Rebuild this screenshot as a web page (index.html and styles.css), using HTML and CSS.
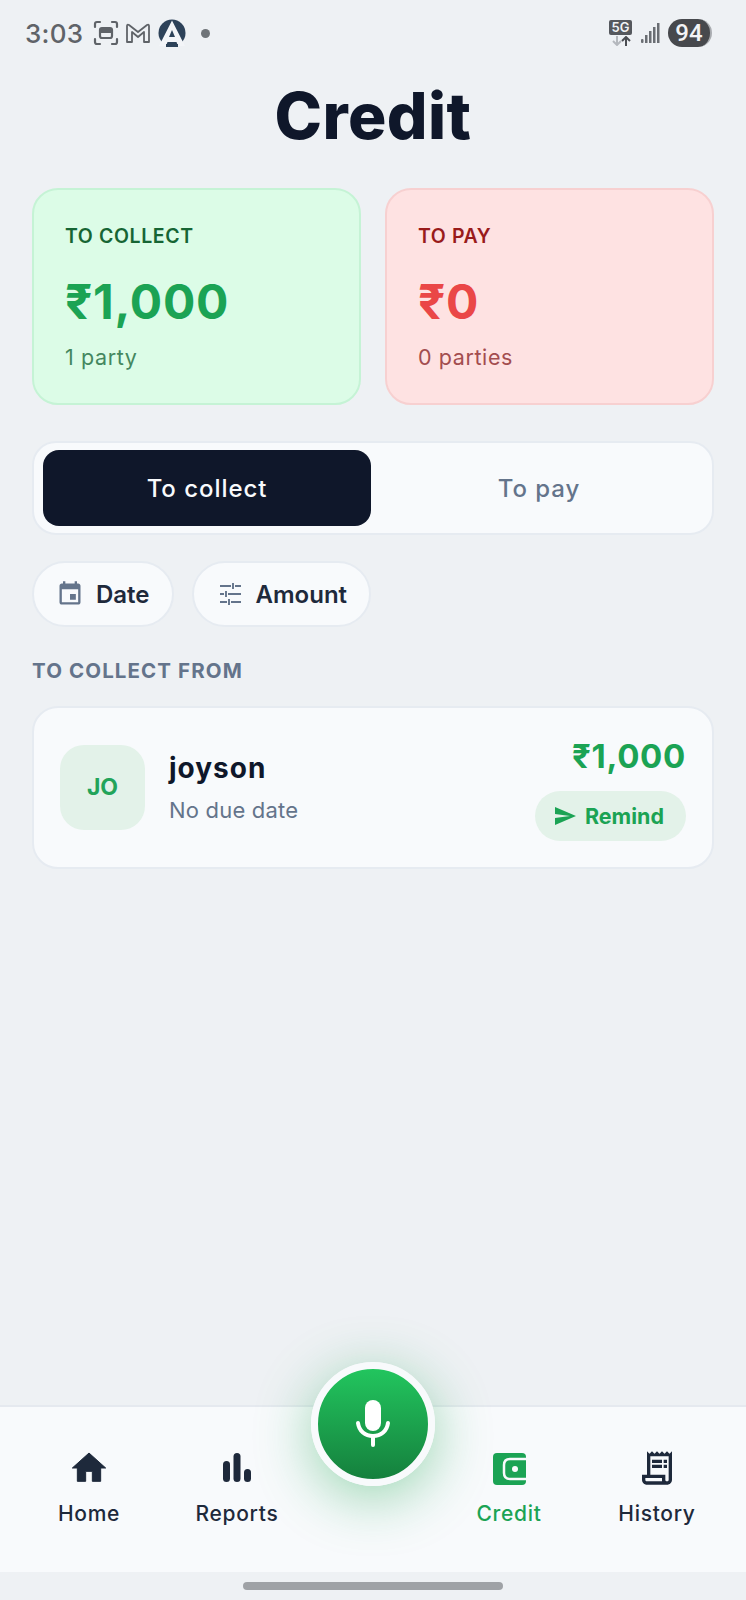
FILE: index.html
```html
<!DOCTYPE html>
<html lang="en">

<head>
    <meta charset="UTF-8" />
    <meta name="viewport" content="width=device-width, initial-scale=1" />
    <title>Credit</title>
    <link rel="stylesheet" href="styles.css">
</head>

<body>

    <!-- Status Bar -->
    <div class="status-bar">
        <div class="status-left">
            <span class="status-time">3:03</span>
            <svg class="status-icon shot" width="28" height="28" viewBox="0 0 28 28" fill="none" stroke="#5f6368" stroke-width="2.2" stroke-linecap="round">
                <path d="M3 8V5q0-2 2-2h3M20 3h3q2 0 2 2v3M25 20v3q0 2-2 2h-3M8 25H5q-2 0-2-2v-3" />
                <rect x="8" y="9" width="12" height="10" rx="2" />
                <rect x="9" y="10" width="10" height="4" fill="#5f6368" stroke="none" />
            </svg>
            <svg class="status-icon mail" width="26" height="22" viewBox="0 0 26 22" fill="none" stroke="#5f6368" stroke-width="1.8" stroke-linejoin="round">
                <path d="M2 20V4q0-2 2-1l9 7 9-7q2-1 2 1v16h-5V10l-6 5-6-5v10z" />
            </svg>
            <svg class="status-icon" width="28" height="28" viewBox="0 0 28 28">
                <circle cx="14" cy="14" r="13.5" fill="#2d4259" />
                <path d="M14 1.500 27 27h-7l-1.500-4h-9L8 27H1z" fill="#f3f5f8" />
                <path d="M14 11l3 7h-6z" fill="#2d4259" />
                <rect x="8" y="25" width="12" height="3" fill="#2d4259" />
            </svg>
            <span class="status-dot"></span>
        </div>
        <div class="status-right">
            <div class="net-badge">
                <span class="net-label">5G</span>
                <svg width="22" height="10" viewBox="0 0 22 10" fill="none" stroke-width="2">
                    <path d="M7 0v8M3 5l4 4 4-4" stroke="#b4b8bd" />
                    <path d="M16 10V2M12 5l4-4 4 4" stroke="#4a4d52" />
                </svg>
            </div>
            <svg class="signal" width="19" height="20" viewBox="0 0 19 20" fill="#6a6e73">
                <rect x="0" y="16" width="2.500" height="4" rx="1" />
                <rect x="4" y="12" width="2.500" height="8" />
                <rect x="8" y="8" width="2.500" height="12" />
                <rect x="12" y="4" width="2.500" height="16" />
                <rect x="16" y="0" width="2.500" height="20" />
            </svg>
            <div class="battery">94</div>
        </div>
    </div>

    <!-- Page Content -->
    <main class="content">
        <h1 class="page-title">Credit</h1>

        <div class="summary-row">
            <div class="summary-card collect">
                <div class="summary-label">TO COLLECT</div>
                <div class="summary-amount">₹1,000</div>
                <div class="summary-note">1 party</div>
            </div>
            <div class="summary-card pay">
                <div class="summary-label">TO PAY</div>
                <div class="summary-amount">₹0</div>
                <div class="summary-note">0 parties</div>
            </div>
        </div>

        <div class="toggle">
            <button class="toggle-btn active">To collect</button>
            <button class="toggle-btn">To pay</button>
        </div>

        <div class="chips">
            <button class="chip">
                <svg width="28" height="28" viewBox="0 0 24 24" fill="#64748b">
                    <path d="M17 12h-5v5h5v-5zM16 1v2H8V1H6v2H5c-1.110 0-1.990.9-1.990 2L3 19c0 1.100.89 2 2 2h14c1.100 0 2-.9 2-2V5c0-1.100-.9-2-2-2h-1V1h-2zm3 18H5V8h14v11z" />
                </svg>
                Date
            </button>
            <button class="chip">
                <svg width="28" height="28" viewBox="0 0 28 28" fill="none" stroke="#64748b" stroke-width="1.900">
                    <path d="M4 6h11M19 6h6M17 3v6M4 14h4M12 14h13M10 11v6M4 22h7M15 22h10M13 19v6" />
                </svg>
                Amount
            </button>
        </div>

        <div class="section-title">TO COLLECT FROM</div>

        <div class="party-card">
            <div class="avatar">JO</div>
            <div class="party-info">
                <div class="party-name">joyson</div>
                <div class="party-due">No due date</div>
            </div>
            <div class="party-side">
                <div class="party-amount">₹1,000</div>
                <button class="remind-btn">
                    <svg width="24" height="24" viewBox="0 0 24 24" fill="#1ba354">
                        <path d="M2.010 21 23 12 2.010 3 2 10l15 2-15 2z" />
                    </svg>
                    Remind
                </button>
            </div>
        </div>
    </main>

    <!-- Bottom Navigation -->
    <nav class="bottom-nav">
        <a class="nav-item" href="#">
            <svg width="40" height="40" viewBox="0 0 24 24" fill="#1e293b">
                <path d="M10 20v-6h4v6h5v-8h3L12 3 2 12h3v8z" stroke="#1e293b" stroke-width=".6" stroke-linejoin="round" />
            </svg>
            Home
        </a>
        <a class="nav-item" href="#">
            <svg width="40" height="40" viewBox="0 0 40 40" fill="#1e293b">
                <rect x="6" y="13" width="7" height="21" rx="3.500" />
                <rect x="16.500" y="5" width="7" height="29" rx="3.500" />
                <rect x="27" y="21" width="7" height="13" rx="3.500" />
            </svg>
            Reports
        </a>
        <div class="nav-gap"></div>
        <a class="nav-item active" href="#">
            <svg width="40" height="40" viewBox="0 0 40 40">
                <rect x="4" y="5" width="33" height="32" rx="4" fill="#1ba354" />
                <path d="M37 11H21q-6 0-6 6v8q0 6 6 6h16" fill="none" stroke="#f8fafc" stroke-width="2.500" />
                <circle cx="26" cy="21" r="3" fill="#f8fafc" />
            </svg>
            Credit
        </a>
        <a class="nav-item" href="#">
            <svg width="40" height="40" viewBox="0 0 24 24" fill="#1e293b">
                <path d="M19.500 3.500 18 2l-1.500 1.500L15 2l-1.500 1.500L12 2l-1.500 1.500L9 2 7.500 3.500 6 2v14H3v3c0 1.660 1.340 3 3 3h12c1.660 0 3-1.340 3-3V2l-1.500 1.500zM15 20H6c-.55 0-1-.45-1-1v-1h10v2zm4-1c0 .55-.45 1-1 1s-1-.45-1-1v-3H8V5h11v14z" />
                <path d="M9 7h6v2H9zm7 0h2v2h-2zm-7 3h6v2H9zm7 0h2v2h-2z" />
            </svg>
            History
        </a>

        <!-- Mic Button -->
        <button class="mic-btn">
            <svg width="44" height="48" viewBox="0 0 44 48" fill="none" stroke="#fff" stroke-linecap="round">
                <rect x="14" y="0" width="16" height="31" rx="8" fill="#fff" stroke="none" />
                <path d="M7 23c1 8 7 13 15 13s14-5 15-13" stroke-width="4" />
                <path d="M22 36v9" stroke-width="4" />
            </svg>
        </button>
    </nav>

    <div class="home-bar">
        <div class="home-indicator"></div>
    </div>

</body>

</html>
```

FILE: styles.css
```css
* {
    box-sizing: border-box;
}

body {
    font-family: 'Inter', sans-serif;
    background-color: #eef1f4;
    color: #0f172a;
    margin: 0;
    height: 1600px;
    display: flex;
    flex-direction: column;
    overflow: hidden;
}

button {
    font-family: inherit;
    border: none;
    background: none;
    padding: 0;
}

/* Status bar */
.status-bar {
    height: 66px;
    flex-shrink: 0;
    display: flex;
    justify-content: space-between;
    align-items: center;
    padding: 0 34px 0 25px;
}

.status-left {
    display: flex;
    align-items: center;
}

.status-time {
    width: 67px;
    font-size: 26px;
    font-weight: 500;
    letter-spacing: .3px;
    color: #5f6368;
}

.status-icon.shot {
    margin-right: 5px;
}

.status-icon.mail {
    margin-right: 7px;
}

.status-dot {
    width: 9px;
    height: 9px;
    border-radius: 50%;
    background-color: #6f7478;
    margin-left: 15px;
}

.status-right {
    display: flex;
    align-items: center;
}

.net-badge {
    display: flex;
    flex-direction: column;
    align-items: center;
    margin-right: 9px;
}

.net-label {
    width: 23px;
    height: 15px;
    background-color: #55585d;
    border-radius: 2px;
    color: #f1f3f5;
    font-size: 13px;
    font-weight: 600;
    line-height: 15px;
    text-align: center;
    margin-bottom: 1px;
}

.signal {
    margin-right: 8px;
}

.battery {
    width: 44px;
    height: 28px;
    border-radius: 14px;
    background-color: #47494d;
    border-right: 2px solid #a9acb0;
    color: #f3f4f6;
    font-family: 'Roboto', sans-serif;
    font-size: 24px;
    font-weight: 500;
    line-height: 28px;
    text-align: center;
}

/* Page content */
.content {
    flex: 1;
    padding: 0 32px;
}

.page-title {
    font-size: 64px;
    font-weight: 800;
    letter-spacing: .4px;
    line-height: 78px;
    text-align: center;
    margin: 11px 0 0;
}

.summary-row {
    display: grid;
    grid-template-columns: 1fr 1fr;
    gap: 24px;
    margin-top: 33px;
}

.summary-card {
    height: 217px;
    border-radius: 26px;
    border: 2px solid;
    padding: 34px 31px 0;
}

.summary-card.collect {
    background-color: #dcfce7;
    border-color: #c5f3d5;
}

.summary-card.pay {
    background-color: #fee2e2;
    border-color: #f7d0d0;
}

.summary-label {
    font-size: 19.500px;
    font-weight: 600;
    letter-spacing: .6px;
    line-height: 24px;
}

.collect .summary-label {
    color: #166534;
}

.pay .summary-label {
    color: #991b1b;
}

.summary-amount {
    font-size: 48px;
    font-weight: 700;
    letter-spacing: .7px;
    line-height: 58px;
    margin-top: 25px;
}

.collect .summary-amount {
    color: #1ba354;
}

.pay .summary-amount {
    color: #ea4747;
}

.summary-note {
    font-size: 21.500px;
    letter-spacing: .6px;
    line-height: 28px;
    margin-top: 12px;
}

.collect .summary-note {
    color: #44875f;
}

.pay .summary-note {
    color: #a34d4f;
}

.toggle {
    height: 94px;
    margin-top: 36px;
    padding: 7px 9px;
    display: grid;
    grid-template-columns: 1fr 1fr;
    gap: 4px;
    background-color: #f8fafc;
    border: 2px solid #e6ebf1;
    border-radius: 24px;
}

.toggle-btn {
    font-size: 24px;
    font-weight: 550;
    letter-spacing: .95px;
    color: #64748b;
    border-radius: 16px;
}

.toggle-btn.active {
    background-color: #0f172a;
    color: #f8fafc;
}

.chips {
    display: flex;
    gap: 18px;
    margin-top: 26px;
}

.chip {
    height: 66px;
    padding: 0 22px;
    display: flex;
    align-items: center;
    gap: 12px;
    background-color: #f8fafc;
    border: 2px solid #e6ebf1;
    border-radius: 33px;
    font-size: 24px;
    font-weight: 600;
    color: #1e293b;
}

.section-title {
    font-size: 20.500px;
    font-weight: 700;
    letter-spacing: 1.100px;
    line-height: 26px;
    color: #64748b;
    margin-top: 31px;
}

.party-card {
    height: 163px;
    margin-top: 22px;
    padding: 0 26px;
    display: flex;
    align-items: center;
    background-color: #f8fafc;
    border: 2px solid #e6ebf1;
    border-radius: 26px;
}

.avatar {
    width: 85px;
    height: 85px;
    border-radius: 24px;
    background-color: #e3f2e9;
    color: #22a45a;
    font-size: 23px;
    font-weight: 700;
    line-height: 85px;
    text-align: center;
}

.party-info {
    flex: 1;
    margin-left: 24px;
}

.party-name {
    font-size: 28px;
    font-weight: 700;
    letter-spacing: 1px;
    line-height: 34px;
}

.party-due {
    font-size: 22px;
    line-height: 28px;
    letter-spacing: .2px;
    color: #64748b;
    margin-top: 11px;
}

.party-side {
    display: flex;
    flex-direction: column;
    align-items: flex-end;
    gap: 14px;
}

.party-amount {
    font-size: 33px;
    font-weight: 700;
    letter-spacing: .7px;
    line-height: 42px;
    color: #1ba354;
}

.remind-btn {
    height: 50px;
    padding: 0 22px 0 18px;
    display: flex;
    align-items: center;
    gap: 8px;
    background-color: #e3f2e9;
    border-radius: 25px;
    font-size: 21.500px;
    font-weight: 700;
    color: #1ba354;
}

/* Bottom navigation */
.bottom-nav {
    position: relative;
    height: 167px;
    flex-shrink: 0;
    padding: 0 15px;
    display: grid;
    grid-template-columns: 148px 148px 124px 148px 148px;
    background-color: #f8fafc;
    border-top: 2px solid #e5e9ef;
}

.nav-item {
    display: flex;
    flex-direction: column;
    align-items: center;
    padding-top: 41px;
    gap: 13px;
    font-size: 21px;
    font-weight: 450;
    letter-spacing: .7px;
    color: #1e293b;
    text-decoration: none;
}

.nav-item.active {
    color: #1ba354;
}

.mic-btn {
    position: absolute;
    left: 311px;
    top: -45px;
    width: 124px;
    height: 124px;
    display: flex;
    align-items: center;
    justify-content: center;
    border-radius: 50%;
    border: 7px solid #f8fafc;
    background: linear-gradient(180deg, #22c55e, #15803d);
    box-shadow: 0 12px 56px rgba(22, 163, 74, 0.42);
}

.home-bar {
    height: 28px;
    flex-shrink: 0;
    padding-top: 10px;
    display: flex;
    justify-content: center;
}

.home-indicator {
    width: 260px;
    height: 8px;
    border-radius: 4px;
    background-color: #9fa2a6;
}
```
